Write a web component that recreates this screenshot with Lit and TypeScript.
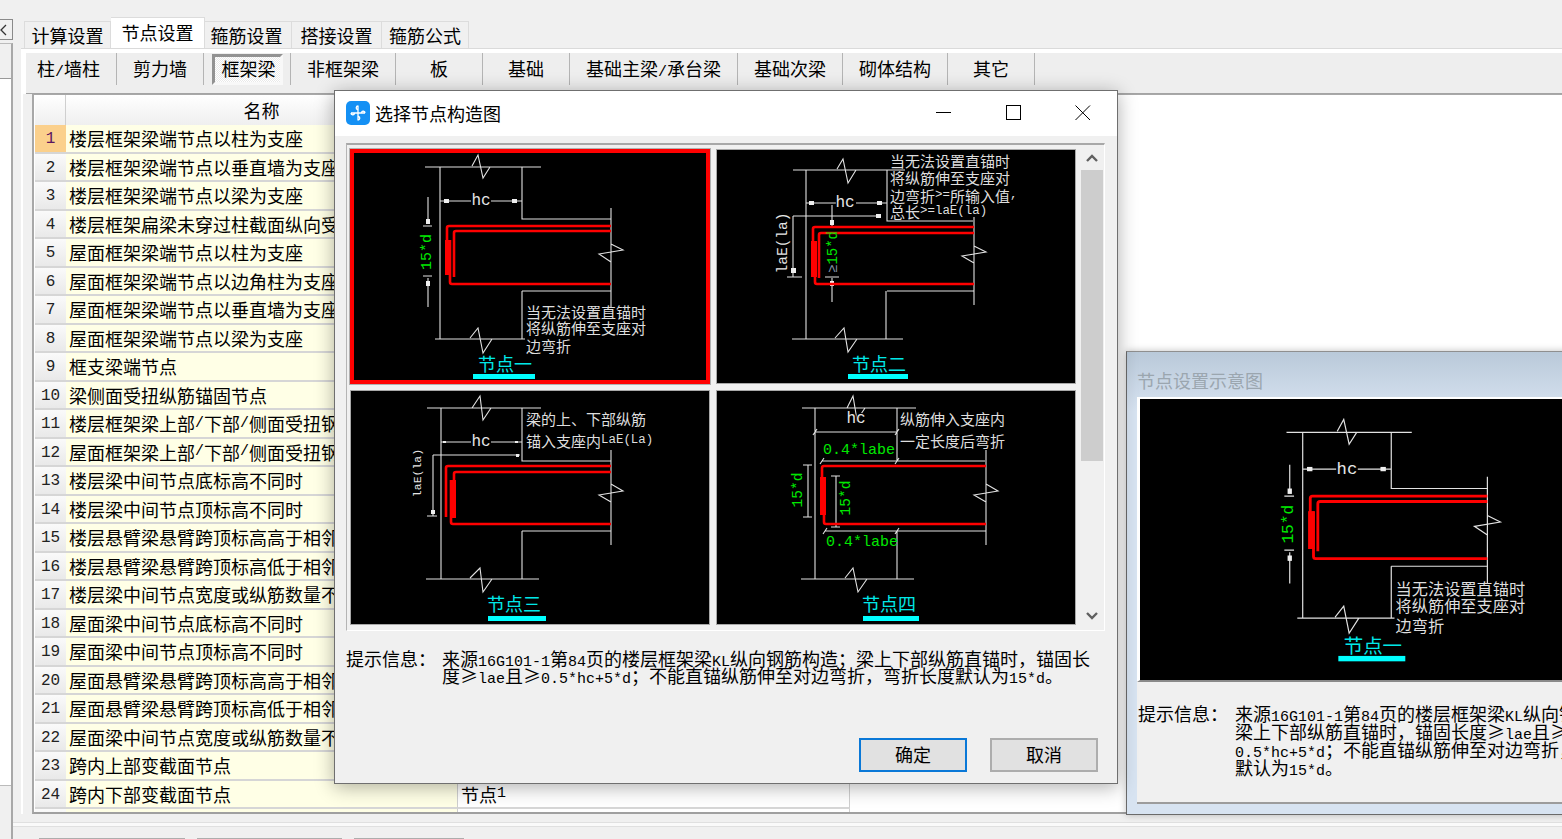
import { LitElement, html, svg, css } from 'lit';
import { customElement } from 'lit/decorators.js';

const tabs = ['计算设置', '节点设置', '箍筋设置', '搭接设置', '箍筋公式'];
const tools = ['柱/墙柱', '剪力墙', '框架梁', '非框架梁', '板', '基础', '基础主梁/承台梁', '基础次梁', '砌体结构', '其它'];
const rows = [
  '楼层框架梁端节点以柱为支座',
  '楼层框架梁端节点以垂直墙为支座',
  '楼层框架梁端节点以梁为支座',
  '楼层框架扁梁未穿过柱截面纵向受力钢筋锚固',
  '屋面框架梁端节点以柱为支座',
  '屋面框架梁端节点以边角柱为支座',
  '屋面框架梁端节点以垂直墙为支座',
  '屋面框架梁端节点以梁为支座',
  '框支梁端节点',
  '梁侧面受扭纵筋锚固节点',
  '楼层框架梁上部/下部/侧面受扭钢筋',
  '屋面框架梁上部/下部/侧面受扭钢筋',
  '楼层梁中间节点底标高不同时',
  '楼层梁中间节点顶标高不同时',
  '楼层悬臂梁悬臂跨顶标高高于相邻跨',
  '楼层悬臂梁悬臂跨顶标高低于相邻跨',
  '楼层梁中间节点宽度或纵筋数量不同时',
  '屋面梁中间节点底标高不同时',
  '屋面梁中间节点顶标高不同时',
  '屋面悬臂梁悬臂跨顶标高高于相邻跨',
  '屋面悬臂梁悬臂跨顶标高低于相邻跨',
  '屋面梁中间节点宽度或纵筋数量不同时',
  '跨内上部变截面节点',
  '跨内下部变截面节点',
  '',
];
const hintMain = [
  '来源16G101-1第84页的楼层框架梁KL纵向钢筋构造；梁上下部纵筋直锚时，锚固长',
  '度≥lae且≥0.5*hc+5*d；不能直锚纵筋伸至对边弯折，弯折长度默认为15*d。',
];
const hintSide = [
  '来源16G101-1第84页的楼层框架梁KL纵向钢筋构造；',
  '梁上下部纵筋直锚时，锚固长度≥lae且≥',
  '0.5*hc+5*d；不能直锚纵筋伸至对边弯折，弯折长度',
  '默认为15*d。',
];

// latin runs get the half width mono, the rest stays in the CJK font
const latin = /([\x21-\x7e]+)/;
const mixed = (t: string) =>
  t.split(latin).filter(Boolean).map((p) => (latin.test(p) ? html`<span class="lat">${p}</span>` : p));

const label = (x: number, y: number, t: string, size = 15) => svg`
  <text class="note" x=${x} y=${y - 2} font-size=${size}>${t
    .split(latin)
    .filter(Boolean)
    .map((p) => (latin.test(p) ? svg`<tspan class="mono" font-size=${size * 0.83}>${p}</tspan>` : p))}</text>`;

const green = (x: number, y: number, t: string, size = 15, rotate = true) => svg`
  <text class="green" x=${x} y=${y} font-size=${size} text-anchor=${rotate ? 'middle' : 'start'}
    transform=${rotate ? `rotate(-90 ${x} ${y})` : ''}>${t}</text>`;

const dimText = (x: number, y: number, t: string, size = 16, rotate = false) => svg`
  <text class="dim" x=${x} y=${y} font-size=${size} text-anchor="middle"
    transform=${rotate ? `rotate(-90 ${x} ${y})` : ''}>${t}</text>`;

const caption = (x: number, y: number, t: string, barX: number, barW: number, barY: number) => svg`
  <text class="cap" x=${x} y=${y - 2}>${t}</text>
  <rect x=${barX} y=${barY} width=${barW} height="5" fill="#00ffff"></rect>`;

const dots = (list: number[][]) =>
  list.map(([x, y, w = 5, h = 4]) => svg`<rect x=${x} y=${y} width=${w} height=${h} fill="#eee"></rect>`);

const nodeOne = svg`
  <path class="ln" d="M425 167H541M440 167V339M522 167V219H611M611 208V307M522 291H611M522 291V339M435 339H525
    M472 166L478 155L483 178L490 167M611 244L623 250L599 254L611 262M470 338L478 328L483 353L492 339
    M440 201H471M491 201H522M428 197V222M423 226H432M423 276H432M428 278V307"></path>
  ${dots([[444, 199], [512, 199], [426, 219, 4, 5], [426, 281, 4, 5]])}
  ${dimText(481, 201, 'hc')}
  ${green(427, 252, '15*d')}
  <path class="rb" d="M611 226H449Q447 226 447 228V275M611 231H456Q454 231 454 233V277M611 284H452Q450 284 450 282V240"></path>
  <rect x="445" y="240" width="6" height="35" fill="#f00"></rect>
  ${label(526, 313, '当无法设置直锚时')}
  ${label(526, 329, '将纵筋伸至支座对')}
  ${label(526, 347, '边弯折')}
  ${caption(478, 365, '节点一', 473, 62, 374)}`;

const nodeTwo = svg`
  <path class="ln" d="M793 170H905M806 170V339M887 170V221H973M974 217V305M887 291H974M886 291V339M792 339H903
    M837 169L843 159L848 183L856 170M974 246L986 252L962 256L974 263M835 338L844 328L848 352L857 339
    M806 203H836M856 203H887M793 216H880M793 216V277M787 277H802M832 205V227M825 277H839M832 278V302"></path>
  ${dots([[809, 201], [877, 201], [876, 214], [791, 268, 5, 5], [830, 220, 4, 5], [830, 281, 4, 5]])}
  ${dimText(845, 203, 'hc')}
  ${dimText(783, 243, 'laE(la)', 14.5, true)}
  <path class="rb" d="M974 227H815Q813 227 813 229V277M974 233H821Q819 233 819 235V278M974 284H817Q815 284 815 282V241"></path>
  <rect x="811" y="241" width="6" height="36" fill="#f00"></rect>
  <text class="green" x="833" y="252" font-size="14" text-anchor="middle" transform="rotate(-90 833 252)"><tspan fill="#8494aa">≥</tspan>15*d</text>
  ${label(890, 162, '当无法设置直锚时')}
  ${label(890, 179, '将纵筋伸至支座对')}
  ${label(890, 197, '边弯折>=所输入值,')}
  ${label(890, 213, '总长>=laE(la)')}
  ${caption(852, 365, '节点二', 848, 60, 374)}`;

const nodeThree = svg`
  <path class="ln" d="M427 408H541M441 408V579M522 408V461H611M611 450V545M522 531H611M522 531V579M426 579H539
    M472 408L480 396L483 420L491 408M611 484L623 491L599 495L611 502M470 578L480 568L483 592L492 579
    M441 442H471M491 442H522M433 455H520M433 455V516M427 516H437"></path>
  ${dots([[443, 441, 3, 2], [515, 441, 3, 2], [516, 454, 3, 3], [431, 510, 4, 4]])}
  ${dimText(481, 442, 'hc')}
  ${dimText(417, 473, 'laE(la)', 11.5, true)}
  <path class="rb" d="M611 466H448Q446 466 446 468V517M611 472H456Q454 472 454 474V518M611 524H453Q451 524 451 522V480"></path>
  <rect x="450" y="480" width="6" height="38" fill="#f00"></rect>
  ${label(526, 420, '梁的上、下部纵筋')}
  ${label(526, 442, '锚入支座内LaE(La)')}
  ${caption(487, 605, '节点三', 488, 58, 616)}`;

const nodeFour = svg`
  <path class="ln" d="M802 408H916M815 408V579M897 408V461M822 461H985M986 450V545M825 531H986M897 531V579M801 579H914
    M847 408L853 396L857 420L865 408M986 484L998 491L974 495L986 502M845 578L853 568L858 592L867 579
    M815 432H897M808 465V517M803 465H812M803 517H812M836 476V527M831 476H840M831 527H840
    M813 435L817 429M895 435L899 429M820 464L824 458M895 464L899 458M823 534L827 528M895 534L899 528"></path>
  ${dimText(856, 419, 'hc', 16)}
  ${green(798, 490, '15*d', 14.5)}
  ${green(846, 498, '15*d', 14.5)}
  ${green(823, 450, '0.4*labe', 15, false)}
  ${green(826, 542, '0.4*labe', 15, false)}
  <path class="rb" d="M986 466H824Q822 466 822 468V515M986 524H826Q824 524 824 522V477"></path>
  <rect x="820" y="477" width="6" height="38" fill="#f00"></rect>
  ${label(900, 420, '纵筋伸入支座内')}
  ${label(900, 442, '一定长度后弯折')}
  ${caption(862, 605, '节点四', 863, 56, 616)}`;

@customElement('app-root')
export class AppRoot extends LitElement {
  static styles = css`
    :host {
      display: block;
      position: relative;
      width: 1562px;
      height: 839px;
      overflow: hidden;
      background: #f0f0f0;
      font-family: 'Noto Sans CJK SC', 'Liberation Sans', sans-serif;
      font-size: 18px;
      color: #000;
    }
    .lat {
      font-family: 'Liberation Mono', monospace;
      font-size: 15px;
    }

    .page {
      display: flex;
      height: 839px;
    }
    .side {
      width: 13px;
      flex: none;
      display: flex;
      flex-direction: column;
      padding-top: 19px;
      box-sizing: border-box;
    }
    .collapse {
      height: 21px;
      box-sizing: border-box;
      border: 1px solid #8a8a8a;
      border-left: none;
      display: flex;
      align-items: center;
    }
    .side-panel {
      margin-top: 3px;
      flex: 1;
      display: flex;
      flex-direction: column;
      border-top: 1px solid #bbb;
      border-right: 2px solid #a8a8a8;
    }
    .side-head {
      height: 34px;
      border-bottom: 1px solid #999;
    }
    .side-list {
      height: 706px;
      background: #fff;
      border-bottom: 1px solid #bbb;
    }
    .side-foot {
      flex: 1;
    }

    .main {
      flex: 1;
      min-width: 0;
      display: flex;
      flex-direction: column;
    }
    .tabs {
      display: flex;
      align-items: flex-end;
      height: 31px;
      margin: 17px 0 0 11px;
    }
    .tab {
      width: 87px;
      height: 27px;
      box-sizing: border-box;
      background: #f0f0f0;
      border: 1px solid #dcdcdc;
      border-bottom: none;
      border-left: none;
      display: flex;
      align-items: center;
      justify-content: center;
    }
    .tab:first-child {
      border-left: 1px solid #dcdcdc;
    }
    .tab:nth-child(3) {
      padding-right: 3px;
    }
    .tab:nth-child(4) {
      width: 90px;
    }
    .tab.on {
      width: 94px;
      height: 31px;
      background: #fff;
      padding-bottom: 2px;
    }

    .pane {
      flex: 1;
      margin-left: 8px;
      display: flex;
      flex-direction: column;
      border-top: 1px solid #dadada;
      background: #f0f0f0;
    }
    .pane-top {
      padding: 4px 0 0 5px;
      background: #fff;
    }
    .tools {
      display: flex;
      height: 40px;
      background: #eee;
      border-bottom: 1px solid #a4a4a4;
      box-sizing: content-box;
    }
    .tool {
      min-width: 87px;
      height: 32px;
      box-sizing: border-box;
      padding: 0 16px 3px;
      border-right: 1px solid #b4b4b4;
      display: flex;
      align-items: center;
      justify-content: center;
      white-space: nowrap;
    }
    .tool:first-child {
      min-width: 91px;
      padding-left: 11px;
    }
    .tool.on {
      padding: 0;
    }
    .tool.on .txt {
      box-sizing: border-box;
      width: 71px;
      height: 31px;
      display: flex;
      align-items: center;
      justify-content: center;
      padding: 0 0 3px 3px;
      border: 3px solid;
      border-color: #929292 #f8f8f8 #f8f8f8 #929292;
      background: repeating-conic-gradient(#fff 0 25%, #e9e9e9 0 50%) 0 0 / 2px 2px;
    }

    .work {
      height: 720px;
      padding-left: 9px;
      border-left: 2px solid #fff;
      box-sizing: border-box;
      display: flex;
    }
    .widget {
      flex: 1;
      min-width: 0;
      background: #fff;
      border-left: 2px solid #a8a8a8;
      border-top: 1px solid #a8a8a8;
      border-bottom: 2px solid #a0a0a0;
      padding-left: 1px;
      overflow: hidden;
      box-sizing: border-box;
    }
    .grid {
      display: grid;
      grid-template-columns: 31px 392px 392px;
      grid-template-rows: 30px;
      grid-auto-rows: 28.5px;
      width: 815px;
    }
    .cell {
      box-sizing: border-box;
      border-bottom: 2px solid #d6d6d6;
      display: flex;
      align-items: center;
      white-space: nowrap;
      overflow: hidden;
      padding-left: 3px;
    }
    .head {
      background: linear-gradient(#fff, #efefef);
      border-right: 1px solid #cfcfcf;
      border-bottom: none;
      justify-content: center;
      padding: 0;
    }
    .idx {
      background: linear-gradient(#fafafa, #e9e9e9);
      justify-content: center;
      padding: 2px 0 0;
      font-family: 'Liberation Mono', monospace;
      font-size: 16px;
      color: #222;
    }
    .idx.sel {
      background: #fbd08c;
      color: #5a1460;
    }
    .name {
      background: #ffffe6;
      border-right: 1px solid #cfcfcf;
    }
    .val {
      background: #fff;
      border-right: 1px solid #cfcfcf;
    }

    .foot {
      flex: 1;
      margin-left: -8px;
      padding-top: 8px;
      display: flex;
      flex-direction: column;
    }
    .foot-rule {
      height: 3px;
      border-top: 1px solid #e0e0e0;
      border-bottom: 1px solid #e0e0e0;
      background: #fafafa;
    }
    .foot-btns {
      display: flex;
      gap: 12px;
      margin: 11px 0 0 26px;
    }
    .foot-btns div {
      height: 20px;
      box-sizing: border-box;
      border: 1px solid #adadad;
      background: #e1e1e1;
    }
    .fb1 {
      width: 146px;
    }
    .fb2 {
      width: 145px;
    }
    .fb3 {
      width: 110px;
    }

    .dialog {
      position: absolute;
      left: 334px;
      top: 90px;
      width: 784px;
      height: 694px;
      box-sizing: border-box;
      border: 1px solid #6f6f6f;
      background: #f0f0f0;
      box-shadow: 0 3px 18px rgba(0, 0, 0, 0.32);
      display: flex;
      flex-direction: column;
    }
    .titlebar {
      height: 45px;
      box-sizing: border-box;
      flex: none;
      background: #fff;
      display: flex;
      align-items: center;
      padding: 0 0 2px 11px;
    }
    .titlebar .ttl {
      margin-left: 5px;
      flex: 1;
    }
    .winbtn {
      width: 70px;
      display: flex;
      justify-content: center;
    }
    .winbtn:last-child {
      width: 68px;
    }
    .dlg-body {
      flex: 1;
      display: flex;
      flex-direction: column;
      padding: 7px 12px 11px 11px;
    }
    .gallery {
      width: 759px;
      height: 488px;
      box-sizing: border-box;
      border-top: 2px solid #a8a8a8;
      border-left: 1px solid #b4b4b4;
      border-right: 1px solid #fff;
      border-bottom: 1px solid #fff;
      display: flex;
      padding: 1px 0 2px 3px;
    }
    .shots {
      display: grid;
      grid-template-columns: 360px 360px;
      grid-template-rows: 235px 235px;
      gap: 6px;
      margin-top: 3px;
    }
    .shot {
      background: #000;
      outline: 1px solid #a8a8a8;
      outline-offset: -1px;
      line-height: 0;
    }
    .shot.sel {
      outline: 4px solid #f00;
      outline-offset: -4px;
      box-shadow: 0 0 0 1px #b0b0b0;
    }
    svg text {
      font-family: 'Noto Sans CJK SC', sans-serif;
    }
    .ln {
      fill: none;
      stroke: #e2e2e2;
      stroke-width: 1.1;
    }
    .rb {
      fill: none;
      stroke: #f00;
      stroke-width: 2.6;
    }
    .note {
      fill: #dedede;
      dominant-baseline: central;
    }
    svg .mono,
    svg .dim,
    svg .green {
      font-family: 'Liberation Mono', monospace;
    }
    .dim {
      fill: #e6e6e6;
      dominant-baseline: central;
      paint-order: stroke;
      stroke: #000;
      stroke-width: 2px;
    }
    .green {
      fill: #00e800;
      dominant-baseline: central;
    }
    .cap {
      fill: #00e8e8;
      font-size: 18px;
      dominant-baseline: central;
    }

    .scroll {
      width: 22px;
      margin-left: 5px;
      background: #f0f0f0;
      display: flex;
      flex-direction: column;
    }
    .sb-btn {
      height: 24px;
      flex: none;
      display: flex;
      align-items: center;
      justify-content: center;
      background: #f0f0f0;
    }
    .sb-thumb {
      height: 291px;
      flex: none;
      background: #cdcdcd;
    }
    .sb-track {
      flex: 1;
    }

    .hint {
      display: flex;
      margin-top: 19px;
    }
    .hint .cap-txt {
      width: 96px;
      flex: none;
      line-height: 17px;
    }
    .hint .txt {
      white-space: nowrap;
    }
    .hint .txt div {
      height: 17px;
      line-height: 17px;
    }
    .actions {
      margin-top: auto;
      display: flex;
      justify-content: flex-end;
      gap: 23px;
      padding-right: 7px;
    }
    .btn {
      width: 108px;
      height: 34px;
      box-sizing: border-box;
      border: 2px solid #adadad;
      background: #e1e1e1;
      padding-bottom: 2px;
      display: flex;
      align-items: center;
      justify-content: center;
    }
    .btn.def {
      border-color: #0a78d7;
    }

    .preview-win {
      position: absolute;
      left: 1126px;
      top: 351px;
      width: 460px;
      height: 464px;
      box-sizing: border-box;
      border: 1px solid #6a6a6a;
      border-top-color: #8f8f8f;
      background: linear-gradient(#b9c9d9, #d7e3f1 60px);
      box-shadow: 0 0 7px rgba(0, 0, 0, 0.25);
      padding: 0 0 10px 10px;
      display: flex;
      flex-direction: column;
    }
    .pv-title {
      height: 45px;
      flex: none;
      display: flex;
      align-items: center;
      padding-top: 10px;
      box-sizing: border-box;
      color: #9ba6af;
      white-space: nowrap;
    }
    .pv-client {
      flex: 1;
      background: #f0f0f0;
      display: flex;
      flex-direction: column;
      border-bottom: 2px solid #9c9c9c;
    }
    .pv-shot {
      height: 285px;
      box-sizing: border-box;
      flex: none;
      border: solid #fff;
      border-width: 2px 0 0 3px;
      background: #000;
      line-height: 0;
      border-bottom: 2px solid #8a8a8a;
      overflow: hidden;
    }
    .pv-hint {
      display: flex;
      padding: 22px 0 0 1px;
    }
    .pv-hint .cap-txt {
      width: 97px;
      flex: none;
      line-height: 18px;
    }
    .pv-hint .txt {
      white-space: nowrap;
    }
    .pv-hint .txt div {
      height: 18px;
      line-height: 18px;
    }
  `;

  render() {
    return html`
      <div class="page">
        <div class="side">
          <div class="collapse">
            <svg width="8" height="12" viewBox="0 0 8 12"><path d="M6 1L1 6L6 11" fill="none" stroke="#333" stroke-width="1.3" /></svg>
          </div>
          <div class="side-panel">
            <div class="side-head"></div>
            <div class="side-list"></div>
            <div class="side-foot"></div>
          </div>
        </div>
        <div class="main">
          <div class="tabs">
            ${tabs.map((t, i) => html`<div class="tab ${i === 1 ? 'on' : ''}">${t}</div>`)}
          </div>
          <div class="pane">
            <div class="pane-top">
              <div class="tools">
                ${tools.map(
                  (t, i) => html`<div class="tool ${i === 2 ? 'on' : ''}"><span class="txt">${mixed(t)}</span></div>`
                )}
              </div>
            </div>
            <div class="work">
              <div class="widget">
                <div class="grid">
                  <div class="cell head"></div>
                  <div class="cell head">名称</div>
                  <div class="cell head"></div>
                  ${rows.map(
                    (t, i) => html`
                      <div class="cell idx ${i === 0 ? 'sel' : ''}">${t ? i + 1 : ''}</div>
                      <div class="cell name">${mixed(t)}</div>
                      <div class="cell val">${t ? mixed('节点1') : ''}</div>
                    `
                  )}
                </div>
              </div>
            </div>
            <div class="foot">
              <div class="foot-rule"></div>
              <div class="foot-btns">
                <div class="fb1"></div>
                <div class="fb2"></div>
                <div class="fb3"></div>
              </div>
            </div>
          </div>
        </div>
      </div>

      <div class="preview-win">
        <div class="pv-title">节点设置示意图</div>
        <div class="pv-client">
          <div class="pv-shot">
            <svg width="421" height="281" viewBox="0 0 421 281">
              <g transform="translate(-312.5 -147) scale(1.08)">${nodeOne}</g>
            </svg>
          </div>
          <div class="pv-hint">
            <div class="cap-txt">提示信息：</div>
            <div class="txt">${hintSide.map((l) => html`<div>${mixed(l)}</div>`)}</div>
          </div>
        </div>
      </div>

      <div class="dialog">
        <div class="titlebar">
          <svg width="24" height="24" viewBox="0 0 24 24">
            <rect width="24" height="24" rx="5" fill="#1490f4" />
            <path
              d="M12 4.5v15M5 12h14M12 5c-2 0-2.500 3-.5 3.500M12 19c2 0 2.500-3 .5-3.500M5 12c0 2 3 2.500 3.500 .5M19 12c0-2-3-2.500-3.500-.5"
              fill="none"
              stroke="#fff"
              stroke-width="1.3"
            />
          </svg>
          <div class="ttl">选择节点构造图</div>
          <div class="winbtn">
            <svg width="16" height="16" viewBox="0 0 16 16"><path d="M0 7.500H15" stroke="#000" /></svg>
          </div>
          <div class="winbtn">
            <svg width="16" height="16" viewBox="0 0 16 16"><rect x=".5" y=".5" width="14" height="14" fill="none" stroke="#000" /></svg>
          </div>
          <div class="winbtn">
            <svg width="16" height="16" viewBox="0 0 16 16"><path d="M.5 .5L15 15M15 .5L.5 15" stroke="#000" /></svg>
          </div>
        </div>
        <div class="dlg-body">
          <div class="gallery">
            <div class="shots">
              <div class="shot sel"><svg width="360" height="235" viewBox="350 149 360 235">${nodeOne}</svg></div>
              <div class="shot"><svg width="360" height="235" viewBox="716 149 360 235">${nodeTwo}</svg></div>
              <div class="shot"><svg width="360" height="235" viewBox="350 390 360 235">${nodeThree}</svg></div>
              <div class="shot"><svg width="360" height="235" viewBox="716 390 360 235">${nodeFour}</svg></div>
            </div>
            <div class="scroll">
              <div class="sb-btn">
                <svg width="12" height="8" viewBox="0 0 12 8"><path d="M1 7L6 2L11 7" fill="none" stroke="#606060" stroke-width="2.4" /></svg>
              </div>
              <div class="sb-thumb"></div>
              <div class="sb-track"></div>
              <div class="sb-btn">
                <svg width="12" height="8" viewBox="0 0 12 8"><path d="M1 1L6 6L11 1" fill="none" stroke="#606060" stroke-width="2.4" /></svg>
              </div>
            </div>
          </div>
          <div class="hint">
            <div class="cap-txt">提示信息：</div>
            <div class="txt">${hintMain.map((l) => html`<div>${mixed(l)}</div>`)}</div>
          </div>
          <div class="actions">
            <div class="btn def">确定</div>
            <div class="btn">取消</div>
          </div>
        </div>
      </div>
    `;
  }
}
